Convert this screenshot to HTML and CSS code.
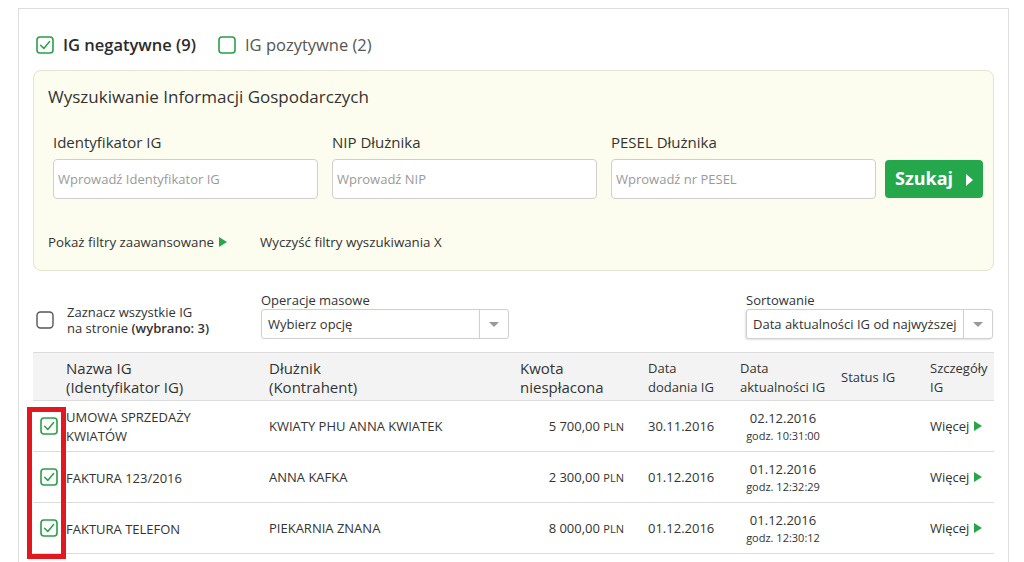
FILE: index.html
```html
<!DOCTYPE html>
<html lang="pl">
<head>
<meta charset="utf-8">
<title>Informacje Gospodarcze</title>
<link rel="stylesheet" href="styles.css">
</head>
<body>
<div class="page">
  <div class="tabs">
    <label class="tab tab-active">
      <svg class="cb" viewBox="0 0 18 18" width="18" height="18"><rect x="1" y="1" width="16" height="16" rx="3" fill="#fff" stroke="#2a9f4a" stroke-width="1.6"/><path d="M4.6 9.2 L7.8 12.4 L13.6 5.6" fill="none" stroke="#2a9f4a" stroke-width="1.5" stroke-linecap="round" stroke-linejoin="round"/></svg>
      <span>IG negatywne (9)</span>
    </label>
    <label class="tab">
      <svg class="cb" viewBox="0 0 18 18" width="18" height="18"><rect x="1" y="1" width="16" height="16" rx="3" fill="#fff" stroke="#2a9f4a" stroke-width="1.6"/></svg>
      <span>IG pozytywne (2)</span>
    </label>
  </div>

  <section class="search">
    <h2 class="search-title">Wyszukiwanie Informacji Gospodarczych</h2>
    <div class="search-fields">
      <div class="field">
        <div class="field-label">Identyfikator IG</div>
        <input class="field-input" type="text" placeholder="Wprowadź Identyfikator IG">
      </div>
      <div class="field">
        <div class="field-label">NIP Dłużnika</div>
        <input class="field-input" type="text" placeholder="Wprowadź NIP">
      </div>
      <div class="field">
        <div class="field-label">PESEL Dłużnika</div>
        <input class="field-input" type="text" placeholder="Wprowadź nr PESEL">
      </div>
      <button class="btn-search" type="button">Szukaj <span class="tri-white"></span></button>
    </div>
    <div class="search-links">
      <span class="link">Pokaż filtry zaawansowane <span class="tri-green"></span></span>
      <span class="link">Wyczyść filtry wyszukiwania X</span>
    </div>
  </section>

  <div class="toolbar">
    <label class="select-all">
      <svg class="cb" viewBox="0 0 18 18" width="18" height="18"><rect x="1" y="1" width="16" height="16" rx="3.5" fill="#fff" stroke="#555" stroke-width="1.4"/></svg>
      <span class="select-all-text"><span class="line">Zaznacz wszystkie IG</span><span class="line">na stronie <b>(wybrano: 3)</b></span></span>
    </label>
    <div class="tool-group mass">
      <div class="tool-label">Operacje masowe</div>
      <div class="select"><span class="select-value">Wybierz opcję</span><span class="select-caret"></span></div>
    </div>
    <div class="tool-group sort">
      <div class="tool-label">Sortowanie</div>
      <div class="select select-shadow"><span class="select-value">Data aktualności IG od najwyższej</span><span class="select-caret"></span></div>
    </div>
  </div>

  <div class="table">
    <div class="trow thead">
      <div class="c c-check"></div>
      <div class="c big">Nazwa IG<br>(Identyfikator IG)</div>
      <div class="c big">Dłużnik<br>(Kontrahent)</div>
      <div class="c big">Kwota<br>niespłacona</div>
      <div class="c">Data<br>dodania IG</div>
      <div class="c">Data<br>aktualności IG</div>
      <div class="c">Status IG</div>
      <div class="c">Szczegóły<br>IG</div>
    </div>

    <div class="trow">
      <div class="c c-check"><svg class="cb" viewBox="0 0 18 18" width="18" height="18"><rect x="1" y="1" width="16" height="16" rx="3" fill="#fff" stroke="#2a9f4a" stroke-width="1.6"/><path d="M4.6 9.2 L7.8 12.4 L13.6 5.6" fill="none" stroke="#2a9f4a" stroke-width="1.5" stroke-linecap="round" stroke-linejoin="round"/></svg></div>
      <div class="c c-name">UMOWA SPRZEDAŻY<br>KWIATÓW</div>
      <div class="c">KWIATY PHU ANNA KWIATEK</div>
      <div class="c c-amount">5 700,00&nbsp;<span class="cur">PLN</span></div>
      <div class="c">30.11.2016</div>
      <div class="c c-upd"><span>02.12.2016</span><span class="time">godz. 10:31:00</span></div>
      <div class="c"></div>
      <div class="c">Więcej <span class="tri-green"></span></div>
    </div>

    <div class="trow">
      <div class="c c-check"><svg class="cb" viewBox="0 0 18 18" width="18" height="18"><rect x="1" y="1" width="16" height="16" rx="3" fill="#fff" stroke="#2a9f4a" stroke-width="1.6"/><path d="M4.6 9.2 L7.8 12.4 L13.6 5.6" fill="none" stroke="#2a9f4a" stroke-width="1.5" stroke-linecap="round" stroke-linejoin="round"/></svg></div>
      <div class="c c-name">FAKTURA 123/2016</div>
      <div class="c">ANNA KAFKA</div>
      <div class="c c-amount">2 300,00&nbsp;<span class="cur">PLN</span></div>
      <div class="c">01.12.2016</div>
      <div class="c c-upd"><span>01.12.2016</span><span class="time">godz. 12:32:29</span></div>
      <div class="c"></div>
      <div class="c">Więcej <span class="tri-green"></span></div>
    </div>

    <div class="trow">
      <div class="c c-check"><svg class="cb" viewBox="0 0 18 18" width="18" height="18"><rect x="1" y="1" width="16" height="16" rx="3" fill="#fff" stroke="#2a9f4a" stroke-width="1.6"/><path d="M4.6 9.2 L7.8 12.4 L13.6 5.6" fill="none" stroke="#2a9f4a" stroke-width="1.5" stroke-linecap="round" stroke-linejoin="round"/></svg></div>
      <div class="c c-name">FAKTURA TELEFON</div>
      <div class="c">PIEKARNIA ZNANA</div>
      <div class="c c-amount">8 000,00&nbsp;<span class="cur">PLN</span></div>
      <div class="c">01.12.2016</div>
      <div class="c c-upd"><span>01.12.2016</span><span class="time">godz. 12:30:12</span></div>
      <div class="c"></div>
      <div class="c">Więcej <span class="tri-green"></span></div>
    </div>
  </div>
</div>
<div class="highlight"></div>
</body>
</html>
```

FILE: styles.css
```css
html, body {
  margin: 0;
  padding: 0;
  overflow: hidden;
  background: #fff;
}
body {
  font-family: "Open Sans", "Noto Sans", sans-serif;
  color: #333;
  position: relative;
  height: 562px;
}
.page {
  box-sizing: border-box;
  margin: 8px 0 0 18px;
  width: 991px;
  height: 554px;
  border: 1px solid #dedede;
  border-bottom: none;
  padding: 27px 14px 0 14px;
}
.cb {
  display: block;
  flex: none;
}

/* tabs */
.tabs {
  display: flex;
  align-items: center;
  height: 18px;
  padding-left: 3px;
}
.tab {
  display: flex;
  align-items: center;
  gap: 9px;
  font-size: 16.5px;
  line-height: 18px;
  color: #555;
  margin-right: 22px;
}
.tab-active {
  font-weight: 600;
  color: #2b2b2b;
}

/* search panel */
.search {
  margin-top: 16px;
  background: #fdfdef;
  border: 1px solid #e4e4d2;
  border-radius: 8px;
  padding: 15px 10px 19px 14px;
}
.search-title {
  margin: 0;
  font-size: 17px;
  font-weight: 400;
  line-height: 22px;
  color: #333;
}
.search-fields {
  display: flex;
  align-items: flex-end;
  margin-top: 24px;
  padding-left: 5px;
}
.field {
  width: 265px;
  margin-right: 14px;
  flex: none;
}
.field:nth-child(3) {
  margin-right: 9px;
}
.field-label {
  font-size: 15px;
  line-height: 20px;
  margin-bottom: 7px;
  color: #333;
}
.field-input {
  box-sizing: border-box;
  width: 265px;
  height: 40px;
  border: 1px solid #cfcfcf;
  border-radius: 4px;
  background: #fff;
  padding: 0 4px;
  font-family: "Open Sans", "Noto Sans", sans-serif;
  font-size: 13px;
  color: #333;
  display: block;
}
.field-input::placeholder {
  color: #9a9a9a;
}
.btn-search {
  box-sizing: border-box;
  flex: none;
  width: 98px;
  height: 38px;
  margin-bottom: 1px;
  border: none;
  border-radius: 4px;
  background: #24a84b;
  color: #fff;
  font-family: "Open Sans", "Noto Sans", sans-serif;
  font-size: 18px;
  font-weight: 700;
  display: flex;
  align-items: center;
  justify-content: center;
  gap: 13px;
  padding: 0 0 2px 0;
}
.tri-white {
  display: inline-block;
  width: 0;
  height: 0;
  border-left: 7px solid #fff;
  border-top: 6px solid transparent;
  border-bottom: 6px solid transparent;
  margin-top: 3px;
}
.search-links {
  display: flex;
  margin-top: 34px;
  font-size: 13.3px;
  line-height: 18px;
  gap: 33px;
}
.link {
  color: #333;
  display: inline-flex;
  align-items: center;
}
.tri-green {
  display: inline-block;
  width: 0;
  height: 0;
  border-left: 8px solid #2aa64a;
  border-top: 5px solid transparent;
  border-bottom: 5px solid transparent;
  margin-left: 5px;
}

/* toolbar */
.toolbar {
  display: flex;
  align-items: flex-start;
  margin-top: 20px;
}
.select-all {
  display: flex;
  align-items: center;
  gap: 13px;
  margin-top: 13px;
  margin-left: 3px;
  width: 225px;
}
.select-all-text {
  display: flex;
  flex-direction: column;
  font-size: 13px;
  line-height: 16px;
  color: #333;
}
.select-all-text b {
  font-weight: 600;
}
.tool-group {
  width: 248px;
}
.sort {
  margin-left: auto;
  margin-right: 1px;
  width: 247px;
}
.tool-label {
  font-size: 13px;
  line-height: 18px;
  color: #333;
}
.select {
  box-sizing: border-box;
  height: 30px;
  border: 1px solid #d0d0d0;
  border-radius: 3px;
  background: #fff;
  display: flex;
  align-items: center;
  font-size: 13px;
  color: #333;
}
.select-shadow {
  box-shadow: -1px 1px 2px rgba(0,0,0,0.12);
}
.select-value {
  flex: 1;
  padding-left: 6px;
  white-space: nowrap;
  overflow: hidden;
}
.select-caret {
  flex: none;
  width: 28px;
  height: 100%;
  border-left: 1px solid #d0d0d0;
  display: flex;
  align-items: center;
  justify-content: center;
}
.select-caret::after {
  content: "";
  width: 0;
  height: 0;
  border-top: 5px solid #999;
  border-left: 5px solid transparent;
  border-right: 5px solid transparent;
}

/* table */
.table {
  margin-top: 13px;
}
.trow {
  display: grid;
  grid-template-columns: 33px 203px 251px 128px 92px 101px 89px 1fr;
  height: 50px;
  border-bottom: 1px solid #dcdcdc;
  font-size: 13px;
  color: #333;
}
.thead {
  border-top: 1px solid #dcdcdc;
  background: #f3f3f3;
  padding-top: 2px;
  box-sizing: content-box;
  height: 45px;
}
.c {
  display: flex;
  align-items: center;
  line-height: 19px;
}
.thead .c {
  font-size: 13px;
  line-height: 19px;
}
.thead .c.big {
  font-size: 15px;
}
.c-check {
  padding-left: 7px;
}
.c-name {
  padding-top: 2px;
}
.c-amount {
  justify-content: flex-end;
  padding-right: 24px;
  white-space: nowrap;
}
.cur {
  font-size: 11px;
}
.c-upd {
  flex-direction: column;
  justify-content: center;
  align-items: center;
  width: 86px;
  line-height: 18px;
  padding-top: 2px;
}
.c-upd .time {
  font-size: 11px;
}

/* annotation overlay */
.highlight {
  position: absolute;
  left: 27px;
  top: 407px;
  width: 39px;
  height: 152px;
  box-sizing: border-box;
  border: 5px solid #e3171f;
}
```
